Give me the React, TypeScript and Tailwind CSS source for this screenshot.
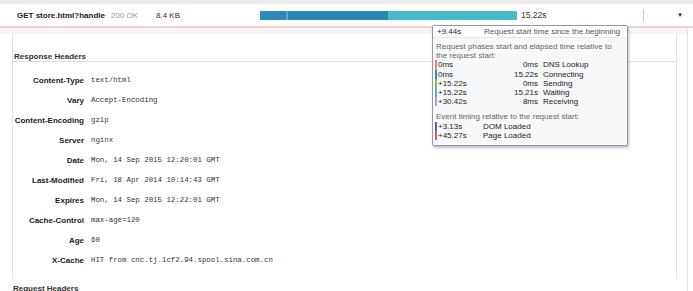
const headers: [string, string][] = [
  ["Content-Type", "text/html"],
  ["Vary", "Accept-Encoding"],
  ["Content-Encoding", "gzip"],
  ["Server", "nginx"],
  ["Date", "Mon, 14 Sep 2015 12:20:01 GMT"],
  ["Last-Modified", "Fri, 18 Apr 2014 10:14:43 GMT"],
  ["Expires", "Mon, 14 Sep 2015 12:22:01 GMT"],
  ["Cache-Control", "max-age=120"],
  ["Age", "60"],
  ["X-Cache", "HIT from cnc.tj.1cf2.94.spool.sina.com.cn"],
];

const phases = [
  { start: "0ms", elapsed: "0ms", label: "DNS Lookup", bar: "bg-[#f0866a]" },
  { start: "0ms", elapsed: "15.22s", label: "Connecting", bar: "bg-[#2a88b6]" },
  { start: "+15.22s", elapsed: "0ms", label: "Sending", bar: "bg-[#7fc242]" },
  { start: "+15.22s", elapsed: "15.21s", label: "Waiting", bar: "bg-[#42bcc6]" },
  { start: "+30.42s", elapsed: "8ms", label: "Receiving", bar: "bg-[#c58cf2]" },
];

const events = [
  { time: "+3.13s", label: "DOM Loaded", bar: "bg-[#5c5cc4]" },
  { time: "+45.27s", label: "Page Loaded", bar: "bg-[#d0605e]" },
];

export default function App() {
  return (
    <div
      className="relative h-[291px] w-[693px] overflow-hidden bg-white text-[#222]"
      style={{ fontFamily: "'Liberation Sans', Arial, sans-serif" }}
    >
      {/* top strip */}
      <div className="h-[4px] bg-[#ececec]" />

      {/* request row */}
      <div className="flex h-[24px] items-center border-b-2 border-[#f2d0d6] pt-[1px] text-[8px]">
        <div className="ml-[17px] w-[92px] overflow-hidden whitespace-nowrap font-bold text-[#222]">
          GET store.html?handle<span className="text-[#bbb]">·</span>
        </div>
        <div className="ml-[2px] w-[45px] text-[#999]">200 OK</div>
        <div className="w-[104px] text-[#333]">8.4 KB</div>

        {/* timeline */}
        <div className="flex h-[9px] w-[257px]">
          <div className="w-[26px] bg-[#2b8ab8]" />
          <div className="w-[2px] bg-[#5aa6d0]" />
          <div className="w-[100px] bg-[#2887b5]" />
          <div className="flex-1 bg-[#45bcc7]" />
        </div>
        <div className="ml-[4px] w-[122px] text-[8.5px] text-[#333]">15.22s</div>
        <div className="h-[11px] w-[1px] bg-[#efb9c4]" />
        <div className="ml-[33px] text-[6px] text-[#222]">▼</div>
      </div>

      {/* body */}
      <div className="h-[263px] w-[688px] border-r border-[#e4e4e4]">
        <div className="h-[6px] bg-[#f4f4f4]" />
        <div className="ml-[12px] mr-[10px] h-[245px] border-l border-r border-[#e2e2e2]">
          <div className="h-[28px] border-b border-[#e0e0e0] pl-[1px] pt-[18px] text-[8px] leading-[9px] font-bold text-[#333]">
            Response Headers
          </div>
          <div className="flex flex-col pt-[9px]">
            {headers.map(([k, v]) => (
              <div key={k} className="flex h-[20px] items-center">
                <div className="w-[71px] shrink-0 text-right text-[8px] font-bold text-[#222]">{k}</div>
                <div
                  className="ml-[7px] whitespace-nowrap text-[7.4px] text-[#333]"
                  style={{ fontFamily: "'Liberation Mono', 'DejaVu Sans Mono', monospace" }}
                >
                  {v}
                </div>
              </div>
            ))}
          </div>
        </div>
        <div className="ml-[13px] pt-[5px] text-[8px] leading-[9px] font-bold text-[#333]">Request Headers</div>
      </div>

      {/* tooltip */}
      <div className="absolute left-[432px] top-[25px] w-[196px] rounded-[2px] border border-[#8d99ab] bg-[#f7f8f9] text-[8px] leading-[9.2px] shadow-[1px_2px_3px_rgba(0,0,0,0.25)]">
        <div className="flex h-[12px] items-center border-b border-[#e6e8eb] bg-white px-[4px]">
          <span className="w-[47px] text-[#222]">+9.44s</span>
          <span className="text-[#555]">Request start time since the beginning</span>
        </div>
        <div className="px-[2px] pb-[5px] pt-[4px]">
          <div className="pl-[1px] text-[#666]">
            Request phases start and elapsed time relative to
            <br />
            the request start:
          </div>
          {phases.map((p) => (
            <div key={p.label} className="flex h-[9.2px] items-stretch">
              <div className={`w-[2px] ${p.bar}`} />
              <div className="ml-[1px] w-[68px] text-[#222]">{p.start}</div>
              <div className="w-[32px] text-right text-[#222]">{p.elapsed}</div>
              <div className="ml-[5px] text-[#222]">{p.label}</div>
            </div>
          ))}
          <div className="mt-[6px] pl-[1px] text-[#666]">Event timing relative to the request start:</div>
          {events.map((e) => (
            <div key={e.label} className="flex h-[9.2px] items-stretch">
              <div className={`w-[1.5px] ${e.bar}`} />
              <div className="ml-[1.5px] w-[45px] text-[#222]">{e.time}</div>
              <div className="text-[#222]">{e.label}</div>
            </div>
          ))}
        </div>
      </div>
    </div>
  );
}
